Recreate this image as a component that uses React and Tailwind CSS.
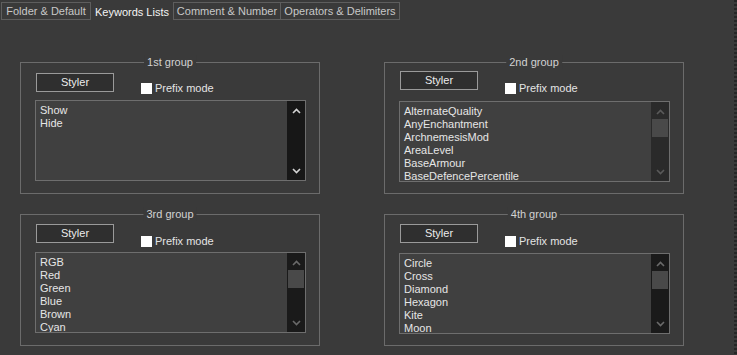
import React from "react";

const groups = [
  { title: "1st group", items: ["Show", "Hide"], bar: "active", top: "pt-[10px] h-[37px]", box: "mt-[9px]" },
  {
    title: "2nd group",
    items: ["AlternateQuality", "AnyEnchantment", "ArchnemesisMod", "AreaLevel", "BaseArmour", "BaseDefencePercentile"],
    bar: "idle",
    top: "pt-[8px] h-[38px]",
    box: "mt-[11px]",
  },
  { title: "3rd group", items: ["RGB", "Red", "Green", "Blue", "Brown", "Cyan"], bar: "thumb", top: "pt-[9px] h-[37px]", box: "mt-[11px]" },
  { title: "4th group", items: ["Circle", "Cross", "Diamond", "Hexagon", "Kite", "Moon"], bar: "thumb", top: "pt-[9px] h-[38px]", box: "mt-[11px]" },
];

const tabs = [
  { label: "Folder & Default", w: "w-[90px]" },
  { label: "Keywords Lists", w: "w-[82px]", active: true },
  { label: "Comment & Number", w: "w-[108px]" },
  { label: "Operators & Delimiters", w: "w-[119px]", joined: true },
];

function Chevron({ up, color }) {
  return (
    <svg width="9" height="6" viewBox="0 0 9 6" className="block">
      <polyline
        points={up ? "1,5 4.5,1.5 8,5" : "1,1 4.5,4.5 8,1"}
        fill="none"
        stroke={color}
        strokeWidth="1.6"
      />
    </svg>
  );
}

function ScrollBar({ kind }) {
  const track = kind === "active" ? "bg-[#171717]" : kind === "idle" ? "bg-[#2a2a2a]" : "bg-[#1a1a1a]";
  const arrow = kind === "active" ? "#d4d4d4" : kind === "idle" ? "#5a5a5a" : "#6a6a6a";
  return (
    <div className={`flex w-[18px] flex-col items-center ${track}`}>
      <div className="flex h-[17px] items-center justify-center pt-[2px]">
        <Chevron up color={arrow} />
      </div>
      {kind !== "active" && <div className="h-[18px] w-[16px] bg-[#494949]" />}
      <div className="flex-1" />
      <div className="flex h-[17px] items-center justify-center pb-[2px]">
        <Chevron color={arrow} />
      </div>
    </div>
  );
}

function Group({ g }) {
  return (
    <div className="relative h-[132px] border border-[#6b6b6b]">
      <span className="absolute left-1/2 top-[-8px] -translate-x-1/2 bg-[#3a3a3a] px-[3px] text-[11px] leading-[14px] text-[#d2d2d2]">
        {g.title}
      </span>
      <div className={`flex items-start pl-[15px] ${g.top}`}>
        <button className="h-[19px] w-[78px] border border-[#9a9a9a] bg-[#2f2f2f] text-[11px] leading-[15px] text-[#ececec]">
          Styler
        </button>
        <label className={`ml-[27px] flex items-center gap-[3px] text-[11px] leading-[13px] text-[#e4e4e4] ${g.box}`}>
          <span className="block h-[11px] w-[11px] bg-white" />
          Prefix mode
        </label>
      </div>
      <div className="ml-[14px] flex h-[81px] w-[271px] border border-[#6e6e6e] bg-[#404040]">
        <ul className="flex-1 overflow-hidden pl-[4px] pt-[3px] text-[11px] leading-[13px] text-[#e6e6e6]">
          {g.items.map((it) => (
            <li key={it}>{it}</li>
          ))}
        </ul>
        <ScrollBar kind={g.bar} />
      </div>
    </div>
  );
}

export default function App() {
  return (
    <div
      className="flex h-[355px] w-[737px] bg-[#3a3a3a] text-[#dcdcdc]"
      style={{ fontFamily: '"Liberation Sans", Arial, sans-serif' }}
    >
      <div className="flex-1">
        {/* tab strip */}
        <div className="flex pl-[1px] pt-[2px]">
          {tabs.map((t) =>
            t.active ? (
              <div key={t.label} className={`${t.w} flex h-[18px] items-start justify-center pt-[2px] text-[11px] text-[#f4f4f4]`}>
                {t.label}
              </div>
            ) : (
              <div
                key={t.label}
                className={`${t.w} flex h-[18px] items-center justify-center border border-[#5e5e5e] text-[11px] text-[#c8c8c8] ${t.joined ? "border-l-0" : ""}`}
              >
                {t.label}
              </div>
            )
          )}
        </div>

        {/* groups */}
        <div className="grid grid-cols-[300px_300px] gap-x-[64px] gap-y-[20px] pl-[20px] pt-[42px]">
          {groups.map((g) => (
            <Group key={g.title} g={g} />
          ))}
        </div>
      </div>
      <div className="w-[3px] bg-[repeating-linear-gradient(to_bottom,#262626_0px,#262626_2px,#3a3a3a_2px,#3a3a3a_4px)]" />
    </div>
  );
}
